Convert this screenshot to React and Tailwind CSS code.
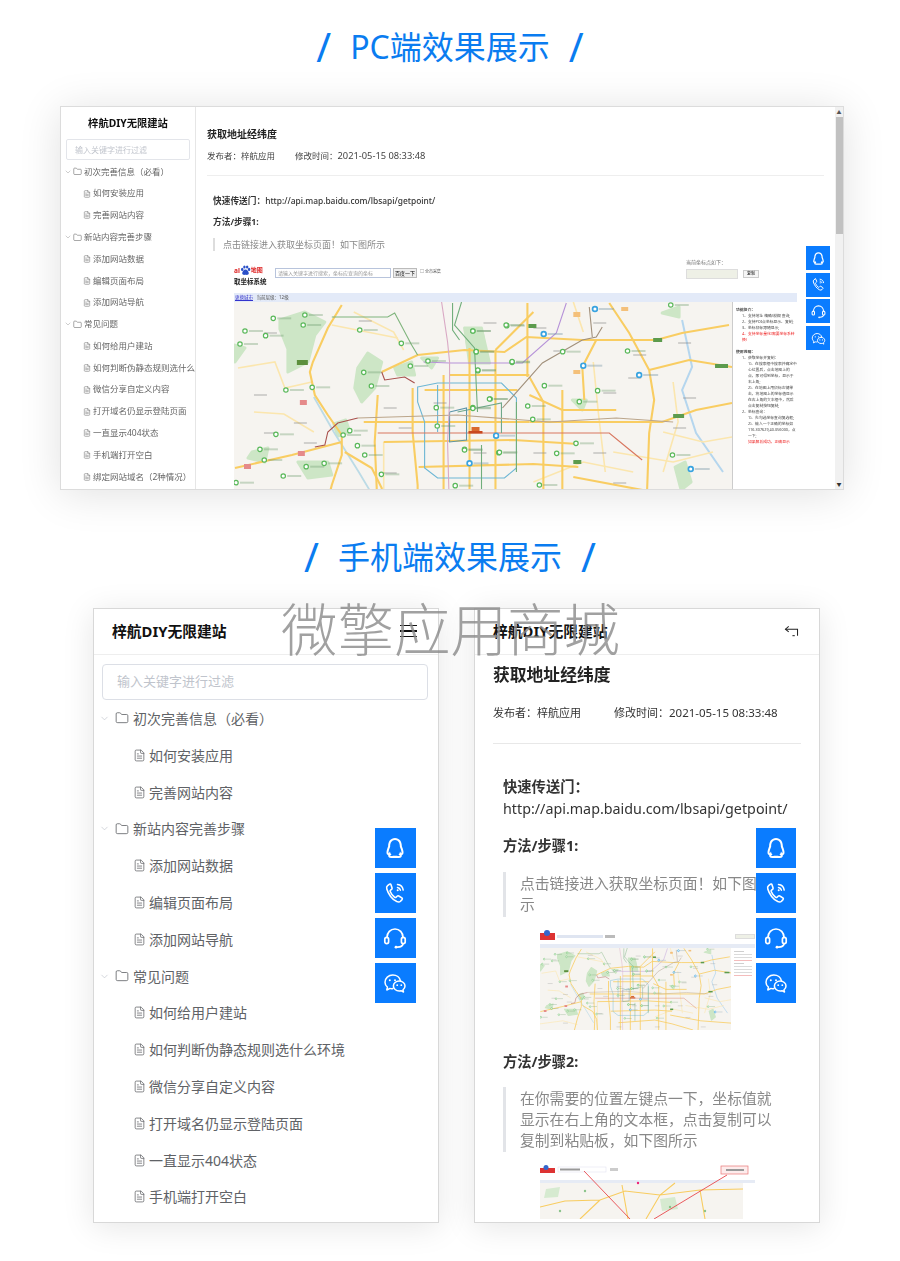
import React from 'react'
import { ChevronDown, Folder, FileText } from 'lucide-react'
import { RiQqLine } from 'react-icons/ri'

const treeShort = [
  { t: 0, label: '初次完善信息\uFF08必看\uFF09' },
  { t: 1, label: '如何安装应用' },
  { t: 1, label: '完善网站内容' },
  { t: 0, label: '新站内容完善步骤' },
  { t: 1, label: '添加网站数据' },
  { t: 1, label: '编辑页面布局' },
  { t: 1, label: '添加网站导航' },
  { t: 0, label: '常见问题' },
  { t: 1, label: '如何给用户建站' },
  { t: 1, label: '如何判断伪静态规则选什么环境' },
  { t: 1, label: '微信分享自定义内容' },
  { t: 1, label: '打开域名仍显示登陆页面' },
  { t: 1, label: '一直显示404状态' },
  { t: 1, label: '手机端打开空白' },
  { t: 1, label: '绑定网站域名\uFF082种情况\uFF09' },
]

const PhoneIcon = ({ className }) => (
  <svg viewBox="0 0 24 24" fill="none" stroke="currentColor" strokeWidth="1.6" strokeLinecap="round" strokeLinejoin="round" className={className}>
    <path d="M6.5 3.2 4.6 4.6c-1 .8-1.2 2-.8 3.4 1.4 5 5.4 10.6 10 12.6 1.5.6 2.8.5 3.7-.4l1.500-1.600c.5-.6.4-1.300-.2-1.700l-3-1.900c-.6-.4-1.200-.3-1.700.2l-1 1c-.4.4-.9.4-1.400.1-2-1.400-3.600-3.600-4.500-5.800-.2-.5-.1-1 .3-1.300l1.100-.9c.5-.4.6-1 .4-1.600L7.900 3.600c-.3-.6-.9-.8-1.400-.4Z" />
    <path d="M14.500 3.500c3 .3 5.300 2.600 5.700 5.600M14.500 6.500c1.500.2 2.600 1.200 2.900 2.700" strokeWidth="1.500" />
    <circle cx="14.700" cy="9.200" r="1" fill="currentColor" stroke="none" />
  </svg>
)

const HeadsetIcon = ({ className }) => (
  <svg viewBox="0 0 24 24" fill="none" stroke="currentColor" strokeWidth="1.700" strokeLinecap="round" strokeLinejoin="round" className={className}>
    <path d="M4 11.500C4 6.500 7.500 3 12 3s8 3.500 8 8.500" />
    <rect x="1.800" y="11.300" width="3.800" height="6.400" rx="1.900" />
    <rect x="18.400" y="11.300" width="3.800" height="6.400" rx="1.900" />
    <path d="M20 18c-.3 1.800-2.400 3-5.500 3.200" />
    <circle cx="13" cy="21.200" r="1.400" fill="currentColor" stroke="none" />
  </svg>
)

const WechatIcon = ({ className }) => (
  <svg viewBox="0 0 24 24" fill="none" stroke="currentColor" strokeWidth="1.500" strokeLinecap="round" strokeLinejoin="round" className={className}>
    <path d="M10 17.500c-.9.200-2 .2-3-.1L3.800 19l.6-2.800C2.900 15 2 13.200 2 11.300 2 7.300 5.500 4 9.800 4c3.800 0 7 2.500 7.700 5.900" />
    <path d="M16.200 10c3.200 0 5.800 2.200 5.800 5 0 1.500-.8 2.900-2 3.800l.5 2.200-2.500-1.300c-.6.200-1.200.3-1.800.3-3.200 0-5.800-2.200-5.800-5s2.600-5 5.800-5Z" />
    <circle cx="6.800" cy="9.300" r="1" fill="currentColor" stroke="none" />
    <circle cx="12" cy="9.300" r="1" fill="currentColor" stroke="none" />
    <circle cx="14.200" cy="14.200" r=".9" fill="currentColor" stroke="none" />
    <circle cx="18.300" cy="14.200" r=".9" fill="currentColor" stroke="none" />
  </svg>
)

// the four blue contact buttons
const FloatButtons = ({ size, gap, icon, className }) => (
  <div className={`absolute flex flex-col ${gap} ${className}`}>
    <div className={`${size} bg-[#0a7cff] text-white flex items-center justify-center`}><RiQqLine className={icon} /></div>
    <div className={`${size} bg-[#0a7cff] text-white flex items-center justify-center`}><PhoneIcon className={icon} /></div>
    <div className={`${size} bg-[#0a7cff] text-white flex items-center justify-center`}><HeadsetIcon className={icon} /></div>
    <div className={`${size} bg-[#0a7cff] text-white flex items-center justify-center`}><WechatIcon className={icon} /></div>
  </div>
)

const parks = [
  '46,18 71,10 91,20 81,33 74,60 54,70 54,47 46,27',
  '124,66 134,51 148,60 141,86 128,100 121,86',
  '161,66 178,60 181,73 164,73',
  '188,56 204,56 198,66',
  '231,26 248,26 251,43 234,43',
  '18,150 34,146 31,160 14,156',
  '64,160 94,160 98,173 74,176',
  '0,43 11,46 1,60',
  '339,98 353,98 349,108',
  '233,38 249,31 256,61 236,61',
  '429,11 446,5 446,15',
  '100,122 112,118 116,130 104,134',
  '442,165 452,160 458,180 448,188',
]

const paleRoads = [
  'M4,66 L41,60 L51,86 L78,80',
  'M98,23 L164,36',
  'M20,110 L50,112 L80,130',
  'M150,140 L150,214',
  'M0,198 L60,190 L98,200',
  'M360,60 L365,110 L372,170',
  'M430,130 L470,140 L499,135',
  'M380,150 L440,160 L480,150',
  'M120,10 L160,30 L170,48',
  'M300,180 L350,160 L400,170',
  'M340,0 L350,30',
  'M440,80 L445,120 L430,170',
]

const yellowRoads = [
  'M108,3 L94,26 L79,60 L76,70 L81,93 L94,113 L108,133 L108,153 L98,183 L90,214',
  'M108,140 L58,153 L1,166',
  'M111,150 L138,166 L148,186 L150,214',
  'M144,93 L141,140 L143,186 L142,214',
  'M148,70 L184,53 L231,48 L271,50 L293,35 L349,38 L369,38 L423,38 L449,31 L496,23',
  'M179,86 L179,130 L184,183 L184,214',
  'M191,88 L284,88',
  'M216,73 L296,73',
  'M294,1 L294,75',
  'M296,120 L429,120 L463,108 L499,101',
  'M130,120 L296,120',
  'M329,88 L329,214',
  'M376,1 L396,31 L416,68 L421,98 L416,131 L413,214',
  'M416,68 L456,58 L499,65',
  'M363,38 L349,65 L351,98',
  'M296,93 L329,108 L383,108',
  'M210,73 L210,214',
  'M236,46 L236,214',
  'M262,48 L262,214',
  'M296,75 L310,100 L310,214',
  'M150,140 L280,138 L345,142',
  'M185,165 L300,162 L345,165',
  'M205,195 L300,188 L345,198 L400,214',
  'M300,10 L280,30 L262,48',
  'M340,175 L420,190 L499,196',
]

const metroLines = [
  ['M184,85 L204,81 L268,81 L283,96 L283,166 L271,176 L204,176 L191,166 L191,120 L184,100 Z', '#6cb6d4'],
  ['M204,83 L204,130', '#6cb6d4'],
  ['M144,131 L291,131 L376,131 L393,145 L409,158', '#d8765f'],
  ['M224,110 L268,101 L268,131', '#6ea88a'],
  ['M216,110 L233,106 L233,138 L216,140 L216,110', '#5b95a8'],
  ['M98,15 L154,15 L161,11 L178,43 L184,53', '#7fb47c'],
  ['M228,0 L221,23 L241,46 L244,110', '#71ae7b'],
  ['M248,143 L248,190', '#71ae7b'],
  ['M283,100 L283,170', '#71ae7b'],
  ['M219,1 L219,28 L226,38', '#71ae7b'],
  ['M333,1 L323,31 L289,61 L216,61 L190,60', '#b692d8'],
  ['M269,106 L309,61 L349,38 L363,35 L369,25 M356,5 L359,35', '#a08f7a'],
  ['M124,116 L224,113 L316,120 L383,116 L440,120', '#bba58a'],
  ['M81,145 L91,143 L94,130 L104,121 L124,116', '#a8504c'],
  ['M148,70 L151,78 L171,75 L181,81', '#a8504c'],
  ['M208,0 L214,40 L216,60 L216,100 L214,140 L216,214', '#d9a8c4'],
]

// zoom crops gave these POI spots, left crop first and then right crop
const leftPoi = [[145,190],[240,180],[235,210],[60,228],[122,242],[45,267],[405,225],[530,265],[610,318],[557,333],[417,352],[440,393],[262,397],[183,405],[635,458],[638,513],[375,527],[355,540],[398,572],[420,600],[153,538],[105,583],[118,615],[244,635],[298,625],[175,663],[33,683],[470,658],[745,228],[847,212],[755,290],[760,347],[863,322],[797,432],[745,458],[720,583],[823,593],[692,692]]
const rightPoi = [[170,675],[70,693],[80,755],[340,755],[85,810],[188,785],[535,753],[665,615],[285,857],[445,872],[390,905],[120,897],[70,925],[235,918],[250,958],[150,1057],[45,1050],[380,1030],[322,1060],[670,1065],[270,1155]]
const bluePoi = [[283,702],[437,627],[402,797],[570,825],[140,1007],[60,1090],[725,1107]]

const poiGreen = [
  ...leftPoi.map(([x, y]) => [x / 3 - 9, y / 3 - 47]),
  ...rightPoi.map(([x, y]) => [216 + x / 3, y / 3 - 202]),
]
const poiBlue = bluePoi.map(([x, y]) => [216 + x / 3, y / 3 - 202])

// scattered grey road names on the map
const roadNames = [[30,30],[125,18],[20,92],[60,120],[70,140],[150,105],[200,100],[240,150],[300,25],[320,48],[360,20],[400,52],[445,40],[370,90],[395,75],[450,95],[440,125],[360,150],[300,150],[150,170],[60,195],[30,130],[165,125],[250,20],[380,180],[420,205],[300,205],[200,205]]

// hand-drawn stand-in for the baidu map, coordinates follow the big PC view
const MapArt = ({ className }) => (
  <svg viewBox="0 0 499 214" preserveAspectRatio="none" className={className}>
    <rect width="499" height="214" fill="#f6f4f0" />
    {parks.map((p, i) => <polygon key={i} points={p} fill="#cde6c6" stroke="#cde6c6" strokeWidth="3" strokeLinejoin="round" />)}
    <path d="M449,18 L459,65 L449,88 L463,131 L490,170" stroke="#b5d6ee" strokeWidth="2" fill="none" />
    <path d="M80,95 L100,130 L125,170 L140,195" stroke="#bcdbe6" strokeWidth="1.800" fill="none" />
    {paleRoads.map((d, i) => <path key={i} d={d} stroke="#fbe6ae" strokeWidth="1.600" fill="none" />)}
    {yellowRoads.map((d, i) => <path key={i} d={d} stroke="#f9cd62" strokeWidth="2.100" fill="none" />)}
    {metroLines.map(([d, c], i) => <path key={i} d={d} stroke={c} strokeWidth="1.100" fill="none" />)}
    {roadNames.map(([x, y], i) => <rect key={i} x={x} y={y} width="13" height="2" fill="#8d8d8d" opacity="0.350" />)}
    {poiGreen.map(([x, y], i) => (
      <g key={i}>
        <circle cx={x} cy={y} r="2.200" fill="#fff" stroke="#5ab85a" strokeWidth="1.200" />
        <rect x={x + 4} y={y - 1} width="14" height="2" fill="#6e9a6e" opacity="0.350" />
      </g>
    ))}
    {poiBlue.map(([x, y], i) => (
      <g key={i}>
        <circle cx={x} cy={y} r="2.400" fill="#fff" stroke="#38a3e0" strokeWidth="1.700" />
        <rect x={x + 4} y={y - 1} width="15" height="2" fill="#7a98a8" opacity="0.400" />
      </g>
    ))}
    <rect x="235" y="129" width="14" height="2.500" fill="#c8481f" />
    <rect x="238" y="125" width="8" height="4" fill="#d9682f" />
    <rect x="63" y="58" width="11" height="5" fill="#5c8f3c" />
    <rect x="66" y="98" width="7" height="5" fill="#e58a8a" />
    <rect x="64" y="149" width="7" height="5" fill="#e58a8a" />
    <rect x="10" y="162" width="7" height="5" fill="#e58a8a" />
    <rect x="340" y="10" width="7" height="5" fill="#f4c07a" />
    <rect x="295" y="22" width="8" height="4" fill="#5c9b4d" />
    <rect x="420" y="36" width="9" height="4" fill="#5c9b4d" />
    <rect x="482" y="62" width="13" height="4" fill="#5c9b4d" />
    <rect x="440" y="112" width="11" height="4" fill="#5c9b4d" />
    <rect x="388" y="5" width="7" height="4" fill="#f4c07a" />
    <rect x="340" y="68" width="7" height="4" fill="#f4c07a" />
    <rect x="340" y="158" width="8" height="4" fill="#5c9b4d" />
  </svg>
)

const RedMapArt = () => (
  <svg viewBox="0 0 215 54" className="w-full h-full block">
    <rect x="0" y="15" width="203" height="39" fill="#f6f4f0" />
    <rect x="0" y="15" width="215" height="3" fill="#e6ebf5" />
    <rect x="0" y="3" width="15" height="5" fill="#d33" />
    <circle cx="6" cy="2.500" r="2.500" fill="#36c" />
    <rect x="18" y="2" width="48" height="5" fill="#fff" stroke="#dde" strokeWidth="0.500" />
    <rect x="20" y="3.500" width="20" height="2" fill="#999" />
    <rect x="70" y="3" width="8" height="3" fill="#ccc" />
    <rect x="181" y="1" width="27" height="8" fill="#fdecec" stroke="#e87777" strokeWidth="0.700" />
    <rect x="186" y="4" width="18" height="2" fill="#999" />
    <polygon points="6,24 20,22 18,32 4,33" fill="#d6ead0" />
    <polygon points="120,34 135,32 138,44 122,46" fill="#d6ead0" />
    <path d="M0,42 L25,36 L60,35 L85,26 L120,30 L160,25 L203,24 M82,20 L88,54 M106,54 L120,30 L135,18 M60,35 L40,54 M160,25 L165,54" stroke="#f8cc5f" strokeWidth="1.100" fill="none" />
    <path d="M44,6 L90,54 M187,10 L114,54" stroke="#e8474c" strokeWidth="0.900" fill="none" />
    <circle cx="45" cy="26" r="1.200" fill="#8bc48b" /><circle cx="130" cy="42" r="1.200" fill="#8bc48b" /><circle cx="165" cy="46" r="1.200" fill="#8bc48b" />
    <circle cx="20" cy="46" r="1.200" fill="#8bc48b" /><circle cx="98" cy="18" r="1.200" fill="#e27" />
  </svg>
)

const BaiduPaw = ({ className }) => (
  <svg viewBox="0 0 20 20" className={className} fill="#2a50c8">
    <ellipse cx="4" cy="8" rx="2.200" ry="2.800" />
    <ellipse cx="8" cy="3.500" rx="2.200" ry="2.800" />
    <ellipse cx="13" cy="3.500" rx="2.200" ry="2.800" />
    <ellipse cx="16.500" cy="8" rx="2.200" ry="2.800" />
    <path d="M10 8c3 0 6 4 6 7 0 3-3 3.500-6 2.800C7 18.500 4 18 4 15c0-3 3-7 6-7Z" />
  </svg>
)

const SectionTitle = ({ children, className }) => (
  <div className={`flex items-center justify-center gap-[19px] text-[#0a7cf0] text-[32px] leading-[36px] ${className}`}>
    <span className="text-[40px]">/</span>
    <span>{children}</span>
    <span className="text-[40px]">/</span>
  </div>
)

const PcTree = () => (
  <div className="pt-[1px]">
    {treeShort.map((r, i) => (
      <div key={i} className={`h-[21.800px] flex items-center whitespace-nowrap text-[#666] text-[8.500px] ${r.t ? 'pl-[22px]' : 'pl-[3px]'}`}>
        {r.t ? null : <ChevronDown className="w-[8px] h-[8px] text-[#b5b5b5] mr-[1px]" />}
        {r.t ? <FileText className="w-[8px] h-[8px] mr-[2px] shrink-0" strokeWidth={1.500} /> : <Folder className="w-[9px] h-[9px] mr-[2px]" strokeWidth={1.500} />}
        <span>{r.label}</span>
      </div>
    ))}
  </div>
)

const PcCard = () => (
  <div className="relative ml-[60px] w-[784px] h-[384px] bg-white border border-[#dcdcdc] shadow-[0_4px_40px_rgba(0,0,0,0.12)] flex overflow-hidden">
    <div className="w-[135px] shrink-0 border-r border-[#e6e6e6] overflow-hidden blur-[0.300px]">
      <div className="pt-[8px] h-[32px] text-center text-[10.300px] font-bold text-[#111] leading-[16px]">梓航DIY无限建站</div>
      <div className="mx-[5px] w-[124px] h-[21px] border border-[#e3e5ea] rounded-[2px] flex items-center pl-[8px] text-[8px] text-[#c0c4cc]">输入关键字进行过滤</div>
      <PcTree />
    </div>
    <div className="flex-1 pl-[11px] overflow-hidden blur-[0.300px]">
      <div className="mt-[20px] text-[10px] leading-[14px] font-bold text-[#222]">获取地址经纬度</div>
      <div className="mt-[9px] flex text-[8.500px] leading-[12px] text-[#444]">
        <span className="w-[88px]">发布者&#xFF1A;梓航应用</span>
        <span>修改时间&#xFF1A;<span className="text-[9.300px]">2021-05-15 08:33:48</span></span>
      </div>
      <div className="mt-[13px] w-[617px] border-t border-[#eee]"></div>
      <div className="mt-[18px] ml-[6px] flex items-baseline gap-[0px] text-[8.700px] leading-[14px] font-medium text-[#333]"><b>快速传送门&#xFF1A;</b><span className="text-[8.400px]">http://api.map.baidu.com/lbsapi/getpoint/</span></div>
      <div className="mt-[7px] ml-[6px] text-[8.700px] leading-[14px] font-bold text-[#333]">方法/步骤1:</div>
      <div className="mt-[9px] ml-[6px] h-[13px] border-l-2 border-[#ddd] pl-[8px] text-[9px] leading-[13px] text-[#888]">点击链接进入获取坐标页面&#xFF01;如下图所示</div>
      <div className="mt-[12px] ml-[27px] w-[563px]">
        <div className="h-[30px] relative flex items-start">
          <div className="w-[36px] text-[6.500px] leading-[9px] font-bold text-[#222]">
            <div className="flex items-center text-[#d22] h-[14px]">al<BaiduPaw className="w-[11px] h-[11px]" /><span className="text-[6px]">地图</span></div>
            <div className="whitespace-nowrap">取坐标系统</div>
          </div>
          <div className="ml-[5px] mt-[5px] w-[116px] h-[10px] border border-[#b8c4dc] text-[5px] leading-[8px] pl-[2px] text-[#999] whitespace-nowrap overflow-hidden">请输入关键字进行搜索&#xFF0C;坐标应查询的坐标</div>
          <div className="ml-[2px] mt-[5px] w-[24px] h-[10px] border border-[#bbb] bg-[#eee] text-[5px] leading-[8px] text-center">百度一下</div>
          <div className="ml-[3px] mt-[6px] text-[4px] text-[#555]">□ 全市采集</div>
          <div className="absolute left-[452px] top-[-4px] text-[5px] text-[#777]">当前坐标点如下&#xFF1A;</div>
          <div className="absolute left-[452px] top-[6px] w-[52px] h-[10px] bg-[#eef0e6] border border-[#ddd]"></div>
          <div className="absolute left-[509px] top-[7px] w-[16px] h-[8px] border border-[#ccc] bg-[#f5f5f5] text-[4px] leading-[6px] text-center">复制</div>
        </div>
        <div className="h-[9px] bg-[#e3eaf8] text-[4.500px] leading-[9px] pl-[1px] text-[#555]"><span className="text-[#33c] underline">更换城市</span>&nbsp;&nbsp;&nbsp;当前层级&#xFF1A;12级</div>
        <div className="flex">
          <MapArt className="w-[499px] h-[214px] shrink-0 border-r border-[#ccc]" />
          <div className="pl-[3px] pt-[5px] w-[64px] text-[3.800px] leading-[6px] text-[#444] overflow-hidden">
            <div className="font-bold">功能简介&#xFF1A;</div>
            <div className="pl-[6px]">1、支持地址 精确/模糊 查询;</div>
            <div className="pl-[6px]">2、支持POI点坐标显示、复制;</div>
            <div className="pl-[6px]">3、坐标鼠标跟随显示;</div>
            <div className="pl-[6px] text-[#e22]">4、支持坐标量化(需要坐标系转换)</div>
            <div className="font-bold mt-[6px]">使用说明&#xFF1A;</div>
            <div className="pl-[6px]">1、获取坐标并复制&#xFF1A;</div>
            <div className="pl-[12px]">1)、在搜索框中搜索并确定中心位置后&#xFF0C;点击地图上的点&#xFF0C;即可得到坐标&#xFF0C;显示于右上角;</div>
            <div className="pl-[12px]">2)、在地图上用鼠标左键单击&#xFF0C;将地图上的坐标值显示在右上角的文本框中&#xFF0C;然后点击复制按钮复制;</div>
            <div className="pl-[6px]">2、坐标查询&#xFF1A;</div>
            <div className="pl-[12px]">1)、先勾选坐标查询复选框;</div>
            <div className="pl-[12px]">2)、输入一个正确的坐标如 116.307629,40.056000&#xFF0C;点一下;</div>
            <div className="pl-[12px] text-[#e22]">如果解析成功&#xFF0C;正确显示</div>
          </div>
        </div>
      </div>
    </div>
    <div className="w-[8px] shrink-0 bg-[#f1f1f1] flex flex-col items-center">
      <div className="h-[10px] text-[5px] leading-[10px] text-[#555]">▲</div>
      <div className="w-[7px] h-[117px] bg-[#c1c1c1]"></div>
      <div className="flex-1"></div>
      <div className="h-[10px] text-[5px] leading-[10px] text-[#333]">▼</div>
    </div>
    <FloatButtons size="w-[24px] h-[24px]" gap="gap-[2.700px]" icon="w-[15px] h-[15px]" className="left-[745px] top-[139px]" />
  </div>
)

const MobileTree = () => (
  <div>
    {treeShort.slice(0, 14).map((r, i) => (
      <div key={i} className={`h-[36.820px] flex items-center whitespace-nowrap text-[14px] text-[#606266] ${r.t ? 'pl-[39px]' : 'pl-[5px]'}`}>
        {r.t ? null : <ChevronDown className="w-[11px] h-[11px] text-[#c0c4cc] mr-[5px]" strokeWidth={1.500} />}
        {r.t ? <FileText className="w-[13px] h-[13px] mr-[3px]" strokeWidth={1.400} /> : <Folder className="w-[14px] h-[14px] mr-[4px]" strokeWidth={1.400} />}
        <span>{r.label}</span>
      </div>
    ))}
  </div>
)

const MobileHeader = ({ pad, icon }) => (
  <div className={`h-[46px] shrink-0 border-b border-[#eee] flex items-center justify-between bg-white pb-[1px] ${pad}`}>
    <span className="text-[14.800px] leading-[20px] font-bold text-[#111]">梓航DIY无限建站</span>
    {icon}
  </div>
)

const BackIcon = (
  <svg viewBox="0 0 16 14" className="w-[15px] h-[13px]" fill="none" stroke="#222" strokeWidth="1.100">
    <path d="M5 1.500 1.500 4.500 5 7.500" />
    <path d="M1.500 4.500H14.500V11.500" />
    <path d="M9 11.500h2.500" />
  </svg>
)

const MenuIcon = (
  <div className="w-[17px] flex flex-col gap-[4px] mr-[2px]">
    <div className="h-[1.500px] bg-[#111]"></div>
    <div className="h-[1.500px] bg-[#111]"></div>
    <div className="h-[1.500px] bg-[#111]"></div>
  </div>
)

const MobileList = () => (
  <div className="relative w-[346px] h-[615px] bg-white border border-[#d8d8d8] flex flex-col overflow-hidden shadow-[0_4px_30px_rgba(0,0,0,0.1)]">
    <MobileHeader pad="pl-[18px] pr-[19px]" icon={MenuIcon} />
    <div className="mx-[8px] mt-[9px] w-[326px] h-[36px] shrink-0 border border-[#dcdfe6] rounded-[4px] flex items-center pl-[14px] text-[13px] text-[#c0c4cc]">输入关键字进行过滤</div>
    <MobileTree />
    <FloatButtons size="w-[40.500px] h-[40.500px]" gap="gap-[4.500px]" icon="w-[24px] h-[24px]" className="left-[281px] top-[218.500px]" />
  </div>
)

const MobileDetail = () => (
  <div className="relative w-[346px] h-[615px] bg-white border border-[#d8d8d8] flex flex-col overflow-hidden shadow-[0_4px_30px_rgba(0,0,0,0.1)]">
    <MobileHeader pad="pl-[18px] pr-[20px]" icon={BackIcon} />
    <div className="pl-[18px] pr-[18px] blur-[0.200px]">
      <div className="mt-[8px] text-[16.800px] leading-[24px] font-bold text-[#222]">获取地址经纬度</div>
      <div className="mt-[18px] flex text-[11px] leading-[16px] text-[#333]">
        <span className="w-[121px]">发布者&#xFF1A;梓航应用</span>
        <span>修改时间&#xFF1A;<span className="text-[11.500px]">2021-05-15 08:33:48</span></span>
      </div>
      <div className="mt-[22px] border-t border-[#e8e8e8]"></div>
      <div className="mt-[32px] ml-[10px] text-[14.300px] leading-[22px] text-[#333] whitespace-nowrap">
        <div className="font-bold">快速传送门&#xFF1A;</div>
        <div>http://api.map.baidu.com/lbsapi/getpoint/</div>
        <div className="mt-[15px] font-bold">方法/步骤1:</div>
      </div>
      <div className="mt-[15px] ml-[10px] w-[272px] py-[1px] border-l-[3px] border-[#e2e4e8] pl-[14px] text-[14.800px] leading-[21.300px] text-[#888]">点击链接进入获取坐标页面&#xFF01;如下图所示</div>
      <div className="mt-[13px] ml-[47px] w-[215px] h-[100px] relative">
        <div className="h-[14px] flex items-center gap-[2px]">
          <div className="w-[15px] h-[7px] bg-[#d33] relative"><div className="absolute left-[4px] top-[-3px] w-[6px] h-[6px] rounded-full bg-[#36c]"></div></div>
          <div className="w-[46px] h-[3px] bg-[#dfe5f1]"></div>
          <div className="w-[10px] h-[3px] bg-[#bbb]"></div>
          <div className="ml-[118px] w-[20px] h-[5px] bg-[#eef0e6] border border-[#ddd]"></div>
        </div>
        <div className="h-[4px] bg-[#e6ebf5]"></div>
        <div className="flex">
          <MapArt className="w-[191px] h-[82px] block shrink-0" />
          <div className="flex-1 pl-[3px] pt-[3px] flex flex-col gap-[2px] opacity-70">
            <div className="h-[1px] w-[10px] bg-[#bbb]"></div>
            <div className="h-[1px] w-[18px] bg-[#ccc]"></div>
            <div className="h-[1px] w-[18px] bg-[#ccc]"></div>
            <div className="h-[1px] w-[18px] bg-[#f0a0a0]"></div>
            <div className="h-[1px] w-[10px] bg-[#bbb]"></div>
            <div className="h-[1px] w-[18px] bg-[#ccc]"></div>
            <div className="h-[1px] w-[18px] bg-[#ccc]"></div>
            <div className="h-[1px] w-[18px] bg-[#ccc]"></div>
            <div className="h-[1px] w-[18px] bg-[#f0a0a0]"></div>
          </div>
        </div>
      </div>
      <div className="mt-[21px] ml-[10px] text-[14.300px] leading-[22px] font-bold text-[#333]">方法/步骤2:</div>
      <div className="mt-[14px] ml-[10px] w-[272px] py-[1px] border-l-[3px] border-[#e2e4e8] pl-[14px] text-[14.800px] leading-[21.300px] text-[#888]">在你需要的位置左键点一下&#xFF0C;坐标值就显示在右上角的文本框&#xFF0C;点击复制可以复制到粘贴板&#xFF0C;如下图所示</div>
      <div className="mt-[13px] ml-[47px] w-[215px] h-[54px]"><RedMapArt /></div>
    </div>
    <FloatButtons size="w-[40.500px] h-[40.500px]" gap="gap-[4.500px]" icon="w-[24px] h-[24px]" className="left-[280.500px] top-[218.500px]" />
  </div>
)

export default function App() {
  return (
    <div className="relative w-[900px] h-[1261px] bg-white overflow-hidden font-['Noto_Sans','Noto_Sans_CJK_SC',sans-serif]">
      <SectionTitle className="pt-[29px]">PC端效果展示</SectionTitle>
      <div className="mt-[41px]"><PcCard /></div>
      <SectionTitle className="mt-[49px]">手机端效果展示</SectionTitle>
      <div className="mt-[33px] ml-[93px] flex gap-[35px]">
        <MobileList />
        <MobileDetail />
      </div>
      <div className="absolute left-[281px] top-[590px] text-[56.500px] leading-[80px] text-[#8a8a8a] opacity-80 font-light whitespace-nowrap">微擎应用商城</div>
    </div>
  )
}
